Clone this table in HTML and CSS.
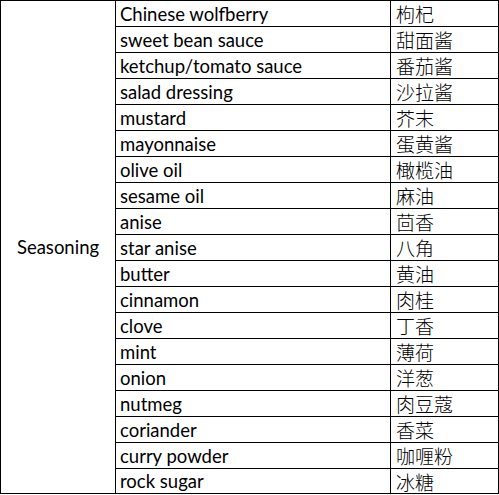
FILE: index.html
```html
<!DOCTYPE html>
<html>
<head>
<meta charset="utf-8">
<link rel="stylesheet" href="styles.css">
</head>
<body>
<table class="grid">
<colgroup><col class="c1"><col class="c2"><col class="c3"></colgroup>
<tbody>
<tr><td class="cat" rowspan="19">Seasoning</td><td class="en">Chinese wolfberry</td><td class="zh">枸杞</td></tr>
<tr><td class="en">sweet bean sauce</td><td class="zh">甜面酱</td></tr>
<tr><td class="en">ketchup/tomato sauce</td><td class="zh">番茄酱</td></tr>
<tr><td class="en">salad dressing</td><td class="zh">沙拉酱</td></tr>
<tr><td class="en">mustard</td><td class="zh">芥末</td></tr>
<tr><td class="en">mayonnaise</td><td class="zh">蛋黄酱</td></tr>
<tr><td class="en">olive oil</td><td class="zh">橄榄油</td></tr>
<tr><td class="en">sesame oil</td><td class="zh">麻油</td></tr>
<tr><td class="en">anise</td><td class="zh">茴香</td></tr>
<tr><td class="en">star anise</td><td class="zh">八角</td></tr>
<tr><td class="en">butter</td><td class="zh">黄油</td></tr>
<tr><td class="en">cinnamon</td><td class="zh">肉桂</td></tr>
<tr><td class="en">clove</td><td class="zh">丁香</td></tr>
<tr><td class="en">mint</td><td class="zh">薄荷</td></tr>
<tr><td class="en">onion</td><td class="zh">洋葱</td></tr>
<tr><td class="en">nutmeg</td><td class="zh">肉豆蔻</td></tr>
<tr><td class="en">coriander</td><td class="zh">香菜</td></tr>
<tr><td class="en">curry powder</td><td class="zh">咖喱粉</td></tr>
<tr class="last"><td class="en">rock sugar</td><td class="zh">冰糖</td></tr>
</tbody>
</table>
</body>
</html>
```

FILE: styles.css
```css
html, body {
  margin: 0;
  padding: 0;
  background: #ffffff;
}
.grid {
  border-collapse: collapse;
  table-layout: fixed;
  width: 498px;
  color: #000;
  font-family: "Lato", "Noto Sans CJK SC", sans-serif;
  font-size: 18.5px;
}
.c1 { width: 115px; }
.c2 { width: 275px; }
.c3 { width: 108px; }
.grid td {
  border: 1px solid #000;
  height: 25px;
  padding: 1px 0 0 4px;
  line-height: 24px;
  white-space: nowrap;
  overflow: hidden;
  box-sizing: border-box;
}
.grid tr td {
  height: 26px;
}
.grid tr.last td {
  height: 25px;
  line-height: 23px;
}
.grid td.cat {
  text-align: center;
  vertical-align: middle;
  padding: 0;
}
.grid td.zh {
  font-family: "Noto Sans CJK SC", sans-serif;
  font-size: 19px;
  font-weight: 300;
  padding-left: 5px;
}
```
